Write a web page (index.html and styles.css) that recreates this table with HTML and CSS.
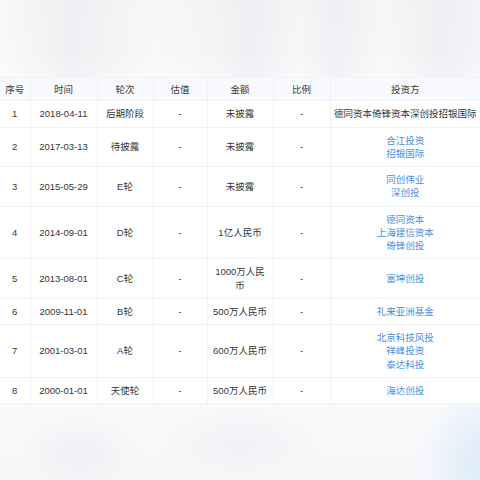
FILE: index.html
```html
<!DOCTYPE html>
<html lang="zh">
<head>
<meta charset="utf-8">
<link rel="stylesheet" href="styles.css">
</head>
<body>
<div class="blur-top"></div>
<table class="fund">
  <colgroup>
    <col class="c1"><col class="c2"><col class="c3"><col class="c4"><col class="c5"><col class="c6"><col class="c7">
  </colgroup>
  <thead>
    <tr><th>序号</th><th>时间</th><th>轮次</th><th>估值</th><th>金额</th><th>比例</th><th>投资方</th></tr>
  </thead>
  <tbody>
    <tr><td>1</td><td>2018-04-11</td><td>后期阶段</td><td>-</td><td>未披露</td><td>-</td><td class="nowrap">德同资本倚锋资本深创投招银国际</td></tr>
    <tr><td>2</td><td>2017-03-13</td><td>待披露</td><td>-</td><td>未披露</td><td>-</td><td><a>合江投资</a><a>招银国际</a></td></tr>
    <tr><td>3</td><td>2015-05-29</td><td>E轮</td><td>-</td><td>未披露</td><td>-</td><td><a>同创伟业</a><a>深创投</a></td></tr>
    <tr><td>4</td><td>2014-09-01</td><td>D轮</td><td>-</td><td>1亿人民币</td><td>-</td><td><a>德同资本</a><a>上海建信资本</a><a>倚锋创投</a></td></tr>
    <tr><td>5</td><td>2013-08-01</td><td>C轮</td><td>-</td><td class="amt">1000万人民币</td><td>-</td><td><a>富坤创投</a></td></tr>
    <tr><td>6</td><td>2009-11-01</td><td>B轮</td><td>-</td><td>500万人民币</td><td>-</td><td><a>礼来亚洲基金</a></td></tr>
    <tr><td>7</td><td>2001-03-01</td><td>A轮</td><td>-</td><td>600万人民币</td><td>-</td><td><a>北京科技风投</a><a>祥峰投资</a><a>泰达科投</a></td></tr>
    <tr><td>8</td><td>2000-01-01</td><td>天使轮</td><td>-</td><td>500万人民币</td><td>-</td><td><a>海达创投</a></td></tr>
  </tbody>
</table>
<div class="blur-bottom"></div>
</body>
</html>
```
FILE: styles.css
```css
html, body {
  margin: 0;
  padding: 0;
  background: #ffffff;
}
body {
  width: 480px;
  height: 480px;
  overflow: hidden;
  font-family: "Liberation Sans", "Noto Sans CJK SC", sans-serif;
}
.blur-top {
  height: 77px;
  background:
    linear-gradient(90deg,
      rgba(255,255,255,0.5) 0%,
      rgba(235,236,239,0.5) 15%,
      rgba(250,251,252,0.6) 32%,
      rgba(244,245,247,0.4) 45%,
      rgba(234,235,238,0.5) 52%,
      rgba(248,249,251,0.5) 62%,
      rgba(236,237,240,0.5) 70%,
      rgba(250,251,252,0.5) 80%,
      rgba(236,237,240,0.6) 92%,
      rgba(244,245,248,0.5) 100%),
    linear-gradient(180deg, #f1f2f4 0%, #f3f4f6 70%, #f9fafc 100%);
}
.fund {
  width: 480px;
  border-collapse: collapse;
  table-layout: fixed;
  font-size: 9.5px;
  color: #363636;
}
.c1 { width: 30px; }
.c2 { width: 67px; }
.c3 { width: 56px; }
.c4 { width: 54px; }
.c5 { width: 66px; }
.c6 { width: 57px; }
.c7 { width: 150px; }
.fund th, .fund td {
  border: 1px solid #f0f2f6;
  text-align: center;
  vertical-align: middle;
  line-height: 13.25px;
  padding: 6px 0;
}
.fund th {
  font-weight: normal;
  background: #f7f9fc;
  color: #3a3a3a;
  padding: 4.5px 0;
}
.fund tr > :first-child { border-left: none; }
.fund tr > :last-child { border-right: none; }
.fund td.nowrap { white-space: nowrap; }
.fund td.amt { padding-left: 4px; padding-right: 4px; }
.fund a {
  display: block;
  color: #4a8fe0;
}
.blur-bottom {
  height: 80px;
  background:
    radial-gradient(ellipse 70px 80px at 490px 60px, rgba(216,232,250,0.95), rgba(216,232,250,0) 100%),
    radial-gradient(ellipse 60px 40px at 80px 50px, rgba(236,237,240,0.7), rgba(236,237,240,0) 100%),
    radial-gradient(ellipse 80px 40px at 240px 40px, rgba(238,239,242,0.7), rgba(238,239,242,0) 100%),
    linear-gradient(180deg, #f8f9fb 0%, #f6f7f9 100%);
}
```
